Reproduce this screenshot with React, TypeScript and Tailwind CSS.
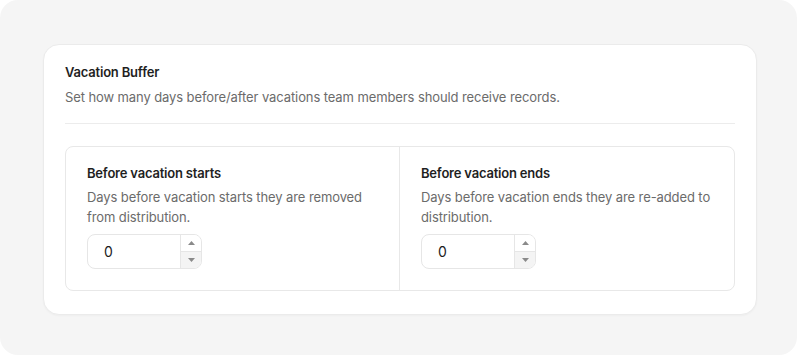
import { useState } from 'react';

function NumberField({ defaultValue }: { defaultValue: number }) {
    const [value, setValue] = useState(defaultValue);

    return (
        <div className="flex w-[115px] h-[35px] rounded-lg border border-[#e6e6e6] bg-white overflow-hidden">
            <div className="flex-1 flex items-center pl-[16px] text-[14px] text-[#1c1c1c]">{value}</div>
            <div className="w-[21px] flex flex-col border-l border-[#e6e6e6]">
                <button
                    onClick={() => setValue(value + 1)}
                    className="flex-1 flex items-center justify-center bg-white"
                >
                    <svg width="7" height="4" viewBox="0 0 7 4">
                        <path d="M3.5 0L7 4H0z" fill="#8a8a8a" />
                    </svg>
                </button>
                <button
                    onClick={() => setValue(Math.max(0, value - 1))}
                    className="flex-1 flex items-center justify-center bg-[#f4f4f4] border-t border-[#e6e6e6]"
                >
                    <svg width="7" height="4" viewBox="0 0 7 4">
                        <path d="M0 0h7L3.5 4z" fill="#8a8a8a" />
                    </svg>
                </button>
            </div>
        </div>
    );
}

const FIELDS = [
    {
        title: 'Before vacation starts',
        desc: 'Days before vacation starts they are removed from distribution.',
    },
    {
        title: 'Before vacation ends',
        desc: 'Days before vacation ends they are re-added to distribution.',
    },
];

export default function App() {
    return (
        <div className="w-[800px] h-[357px] bg-white font-['Inter',sans-serif]">
            <div className="w-[797px] h-[355px] rounded-[18px] bg-[#f5f5f5] pt-[44px] pl-[43px]">
                <div className="w-[714px] rounded-[16px] border border-[#ebebeb] bg-white px-[21px] pt-[17px] pb-[23px] shadow-[0_1px_2px_rgba(0,0,0,0.03)]">
                    <h3 className="text-[13px] leading-5 font-semibold tracking-[-0.2px] text-[#1f1f1f]">Vacation Buffer</h3>
                    <p className="mt-[5px] text-[13px] leading-5 tracking-[-0.1px] text-[#6b6b6b]">
                        Set how many days before/after vacations team members should receive records.
                    </p>
                    <div className="mt-[16px] mb-[22px] h-px bg-[#ececec]"></div>

                    <div className="grid grid-cols-2 rounded-lg border border-[#e8e8e8] divide-x divide-[#e8e8e8]">
                        {FIELDS.map((f, i) => (
                            <div key={i} className="pl-[21px] pr-5 pt-[16px] pb-[21px]">
                                <h4 className="text-[13px] leading-5 font-semibold tracking-[-0.2px] text-[#1f1f1f]">{f.title}</h4>
                                <p className="mt-1 text-[13px] leading-5 tracking-[-0.1px] text-[#6b6b6b]">{f.desc}</p>
                                <div className="mt-[7px]">
                                    <NumberField defaultValue={0} />
                                </div>
                            </div>
                        ))}
                    </div>
                </div>
            </div>
        </div>
    );
}
